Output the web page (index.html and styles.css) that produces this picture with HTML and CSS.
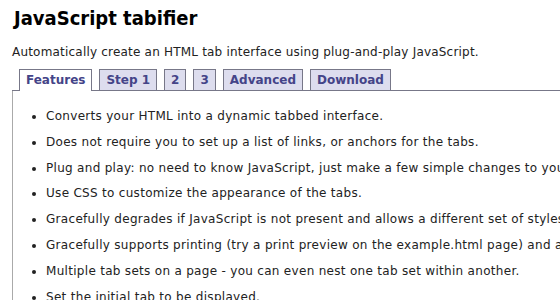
FILE: index.html
```html
<!DOCTYPE html>
<html>
<head>
<meta charset="utf-8">
<link rel="stylesheet" href="styles.css">
</head>
<body>
<h1 class="title">JavaScript tabifier</h1>
<p class="intro">Automatically create an HTML tab interface using plug-and-play JavaScript.</p>
<div class="tabber">
  <ul class="tabnav">
    <li class="tab active">Features</li>
    <li class="tab">Step 1</li>
    <li class="tab">2</li>
    <li class="tab">3</li>
    <li class="tab">Advanced</li>
    <li class="tab">Download</li>
  </ul>
  <div class="panel">
    <ul class="features">
      <li>Converts your HTML into a dynamic tabbed interface.</li>
      <li>Does not require you to set up a list of links, or anchors for the tabs.</li>
      <li>Plug and play: no need to know JavaScript, just make a few simple changes to your HTML.</li>
      <li>Use CSS to customize the appearance of the tabs.</li>
      <li>Gracefully degrades if JavaScript is not present and allows a different set of styles.</li>
      <li>Gracefully supports printing (try a print preview on the example.html page) and all content.</li>
      <li>Multiple tab sets on a page - you can even nest one tab set within another.</li>
      <li>Set the initial tab to be displayed.</li>
    </ul>
  </div>
</div>
</body>
</html>
```

FILE: styles.css
```css
html, body {
  margin: 0;
  padding: 0;
  background: #fff;
  overflow: hidden;
}
body {
  padding: 0 0 0 12px;
  font-family: "DejaVu Sans", Verdana, sans-serif;
  color: #222;
  width: 620px;
}
.title {
  margin: 0 0 0 2px;
  padding-top: 5px;
  font-family: "DejaVu Sans Condensed", "DejaVu Sans", sans-serif;
  font-size: 20px;
  line-height: 26px;
  font-weight: bold;
  color: #000;
}
.intro {
  margin: 14px 0 0 0;
  font-size: 12px;
  line-height: 15px;
  letter-spacing: 0.2px;
}
.tabber {
  margin-top: 9px;
}
.tabnav {
  display: flex;
  align-items: flex-end;
  gap: 7px;
  margin: 0;
  padding: 0 0 0 7px;
  list-style: none;
  border-bottom: 1px solid #778;
  height: 21px;
}
.tab {
  box-sizing: border-box;
  height: 21px;
  padding: 3px 6px 0 6px;
  border: 1px solid #778;
  border-bottom: none;
  background: #dde;
  color: #448;
  font-size: 12px;
  line-height: 15px;
  font-weight: bold;
}
.tab.active {
  background: #fff;
  height: 22px;
  margin-bottom: -1px;
}
.panel {
  border-left: 1px solid #aaa;
  padding: 5px;
  height: 300px;
}
.features {
  margin: 13px 0 0 0;
  padding-left: 28px;
  font-size: 12px;
  line-height: 15px;
  letter-spacing: 0.3px;
}
.features li {
  margin-bottom: 10.8px;
  white-space: nowrap;
}
```
